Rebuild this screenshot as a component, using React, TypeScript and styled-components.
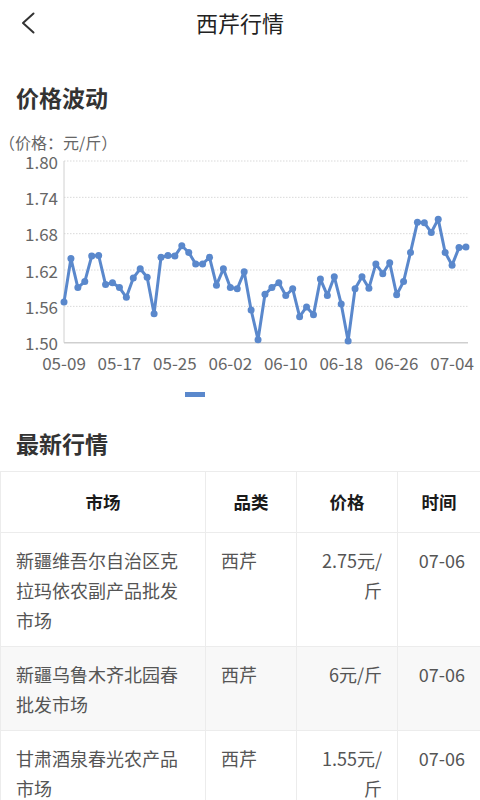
import React from "react";
import styled, { createGlobalStyle } from "styled-components";

const GlobalStyle = createGlobalStyle`
  html, body { margin: 0; padding: 0; background: #ffffff; }
  body { font-family: "Noto Sans CJK SC", "Noto Sans", sans-serif; color: #333; }
  * { box-sizing: border-box; }
`;

const Page = styled.div`
  width: 480px;
  min-height: 800px;
  background: #fff;
  overflow: hidden;
`;

const NavBar = styled.header`
  position: relative;
  height: 45px;
  display: flex;
  align-items: center;
  justify-content: center;
`;

const BackButton = styled.button`
  position: absolute;
  left: 14px;
  top: 8px;
  width: 28px;
  height: 30px;
  border: none;
  background: none;
  padding: 0;
  display: flex;
  align-items: center;
  justify-content: center;
`;

const NavTitle = styled.h1`
  margin: 0;
  font-size: 22px;
  font-weight: 400;
  color: #222;
  line-height: 45px;
`;

const SectionTitle = styled.h2<{ $top: number }>`
  margin: ${(p) => p.$top}px 0 0;
  padding: 0 16px;
  font-size: 23px;
  line-height: 32px;
  font-weight: 700;
  color: #333;
`;

const ChartSvg = styled.svg`
  display: block;
  width: 480px;
  height: 297px;
`;

const Table = styled.table`
  margin-top: 12px;
  width: 480px;
  border-collapse: collapse;
  table-layout: fixed;
`;

const Th = styled.th`
  border: 1px solid #ececec;
  padding: 15px 8px;
  line-height: 30px;
  font-size: 17.5px;
  font-weight: 700;
  color: #1a1a1a;
  text-align: center;
`;

const Row = styled.tr<{ $shade: boolean }>`
  background: ${(p) => (p.$shade ? "#f8f8f8" : "#ffffff")};
`;

const Td = styled.td<{ $align: "left" | "right" }>`
  border: 1px solid #ececec;
  padding: 12px 15px 11px 15px;
  line-height: 30px;
  font-size: 18px;
  color: #555;
  vertical-align: top;
  text-align: ${(p) => p.$align};
  word-break: break-all;
`;

const values = [
  1.567, 1.639, 1.591, 1.601, 1.643, 1.644, 1.596, 1.599, 1.591, 1.575,
  1.607, 1.622, 1.608, 1.548, 1.641, 1.644, 1.643, 1.66, 1.649, 1.63,
  1.63, 1.641, 1.595, 1.622, 1.591, 1.589, 1.617, 1.554, 1.505, 1.58,
  1.591, 1.599, 1.578, 1.589, 1.543, 1.559, 1.546, 1.605, 1.578, 1.609,
  1.564, 1.503, 1.589, 1.609, 1.59, 1.63, 1.614, 1.632, 1.579, 1.601,
  1.649, 1.699, 1.698, 1.682, 1.704, 1.649, 1.628, 1.657, 1.658,
];

const xLabels = ["05-09", "05-17", "05-25", "06-02", "06-10", "06-18", "06-26", "07-04"];
const yTicks = [1.8, 1.74, 1.68, 1.62, 1.56, 1.5];

const X0 = 64;
const STEP = 6.93;
const YTOP = 48;
const YBOT = 229.7;
const xAt = (i: number) => X0 + i * STEP;
const yAt = (v: number) => YTOP + ((1.8 - v) / 0.3) * (YBOT - YTOP);

function PriceChart() {
  const pts = values.map((v, i) => `${xAt(i).toFixed(2)},${yAt(v).toFixed(2)}`).join(" ");
  return (
    <ChartSvg viewBox="0 0 480 297">
      <text x={-1} y={29} fontSize={16} fill="#666" dominantBaseline="central">
        （价格：元/斤）
      </text>
      {yTicks.map((t, i) => {
        const y = yAt(t);
        return (
          <g key={t}>
            {i < yTicks.length - 1 && (
              <line x1={X0} x2={468} y1={y} y2={y} stroke="#d9d9d9" strokeWidth={1} strokeDasharray="1.5 1.5" />
            )}
            <text x={58} y={y} fontSize={17} fill="#666" textAnchor="end" dominantBaseline="central">
              {t.toFixed(2)}
            </text>
          </g>
        );
      })}
      <line x1={X0} x2={X0} y1={YTOP} y2={YBOT} stroke="#d0d0d0" strokeWidth={1} />
      <line x1={X0} x2={468} y1={YBOT} y2={YBOT} stroke="#cfcfcf" strokeWidth={1.5} />
      {xLabels.map((l, k) => (
        <text key={l} x={xAt(k * 8)} y={249} fontSize={17} fill="#666" textAnchor="middle" dominantBaseline="central">
          {l}
        </text>
      ))}
      <polyline points={pts} fill="none" stroke="#5a88cc" strokeWidth={3} strokeLinejoin="round" />
      {values.map((v, i) => (
        <circle key={i} cx={xAt(i)} cy={yAt(v)} r={3.5} fill="#5a88cc" />
      ))}
      <rect x={185} y={279} width={20} height={5} fill="#5a88cc" />
    </ChartSvg>
  );
}

const rows = [
  { market: "新疆维吾尔自治区克拉玛依农副产品批发市场", kind: "西芹", price: "2.75元/斤", time: "07-06" },
  { market: "新疆乌鲁木齐北园春批发市场", kind: "西芹", price: "6元/斤", time: "07-06" },
  { market: "甘肃酒泉春光农产品市场", kind: "西芹", price: "1.55元/斤", time: "07-06" },
];

export default function App() {
  return (
    <Page>
      <GlobalStyle />
      <NavBar>
        <BackButton aria-label="back">
          <svg width="16" height="22" viewBox="0 0 16 22">
            <path d="M13.5 1.5 L3 11 L13.5 20.5" fill="none" stroke="#333" strokeWidth="2" strokeLinecap="round" strokeLinejoin="round" />
          </svg>
        </BackButton>
        <NavTitle>西芹行情</NavTitle>
      </NavBar>
      <SectionTitle $top={36}>价格波动</SectionTitle>
      <PriceChart />
      <SectionTitle $top={17}>最新行情</SectionTitle>
      <Table>
        <colgroup>
          <col style={{ width: 205 }} />
          <col style={{ width: 91 }} />
          <col style={{ width: 101 }} />
          <col style={{ width: 83 }} />
        </colgroup>
        <thead>
          <tr>
            <Th>市场</Th>
            <Th>品类</Th>
            <Th>价格</Th>
            <Th>时间</Th>
          </tr>
        </thead>
        <tbody>
          {rows.map((r, i) => (
            <Row key={i} $shade={i % 2 === 1}>
              <Td $align="left">{r.market}</Td>
              <Td $align="left">{r.kind}</Td>
              <Td $align="right">{r.price}</Td>
              <Td $align="right">{r.time}</Td>
            </Row>
          ))}
        </tbody>
      </Table>
    </Page>
  );
}
